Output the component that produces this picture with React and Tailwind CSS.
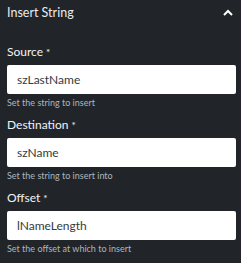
import React from 'react';

const fields = [
  { label: 'Source', value: 'szLastName', help: 'Set the string to insert' },
  { label: 'Destination', value: 'szName', help: 'Set the string to insert into' },
  { label: 'Offset', value: 'lNameLength', help: 'Set the offset at which to insert' },
];

const App = () => {
  return (
    <div className="w-[241px] h-[263px] bg-[#212529] text-white font-['Lato',sans-serif] overflow-hidden">
      <div className="flex items-center justify-between pl-[7px] pr-[8px] h-[25px]">
        <span className="text-[12.5px] leading-[16px] text-[#e9ecef]">Insert String</span>
        <svg width="10" height="8" viewBox="0 0 10 8">
          <path d="M1 6 L5 2 L9 6" stroke="#fff" strokeWidth="2" fill="none" />
        </svg>
      </div>
      <div className="pt-[19px] pl-[7px] pr-[5px]">
        {fields.map((f) => (
          <div key={f.label} className="mb-[7px]">
            <div className="text-[12px] leading-[16px] text-[#f1f3f5]">
              {f.label}
              <span className="text-[10px] align-top ml-[3px]">*</span>
            </div>
            <div className="mt-[5px] h-[29px] bg-white rounded-[2px] flex items-center pl-[10px] text-[12px] text-[#343a40]">
              {f.value}
            </div>
            <div className="mt-[2px] text-[9px] leading-[14px] text-[#adb5bd]">{f.help}</div>
          </div>
        ))}
      </div>
    </div>
  );
};

export default App;
